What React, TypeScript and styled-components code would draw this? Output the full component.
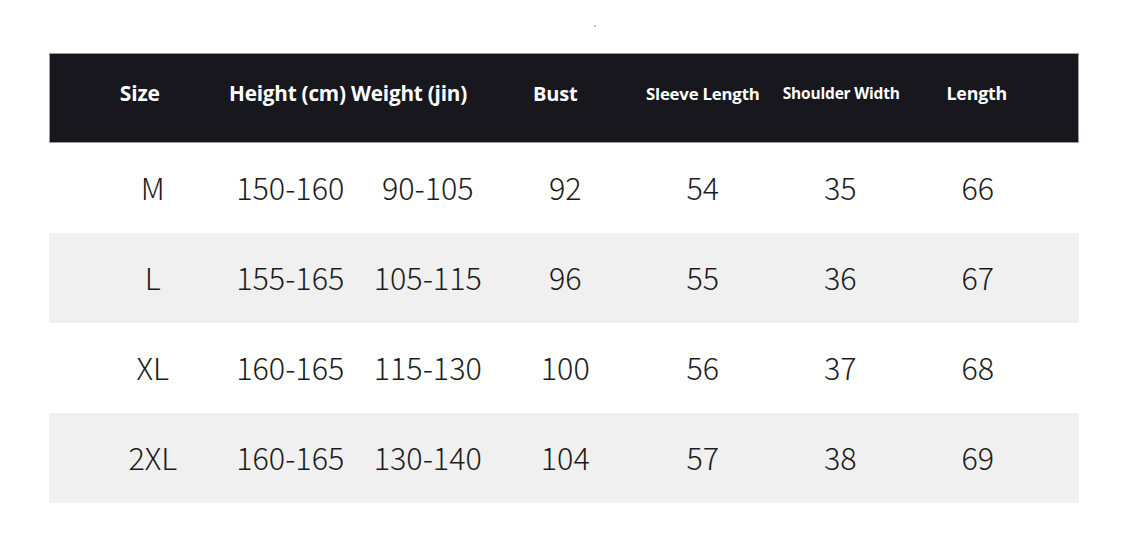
import styled, { createGlobalStyle } from "styled-components";

const GlobalStyle = createGlobalStyle`
  html, body {
    margin: 0;
    padding: 0;
    background: #ffffff;
  }
`;

const Page = styled.div`
  width: 1125px;
  height: 550px;
  box-sizing: border-box;
  padding: 53px 46px 0 49px;
  background: #ffffff;
  position: relative;
`;

const Speck = styled.span`
  position: absolute;
  top: 25px;
  left: 594px;
  width: 2px;
  height: 2px;
  background: #c8c8c8;
`;

const Table = styled.div`
  width: 1030px;
  display: flex;
  flex-direction: column;
`;

const HeaderRow = styled.div`
  height: 90px;
  box-sizing: border-box;
  background: #18171d;
  border: 1px solid #9c9c9c;
  display: grid;
  grid-template-columns: 35px repeat(7, 137.5px) 1fr;
  align-items: center;
  padding-bottom: 10px;
`;

const HeadCell = styled.div<{ $shift?: number; $size?: number; $span?: number }>`
  grid-column: span ${(p) => p.$span ?? 1};
  text-align: center;
  color: #ffffff;
  font-family: "Open Sans", "Noto Sans", sans-serif;
  font-weight: 700;
  font-size: ${(p) => p.$size ?? 20}px;
  letter-spacing: -0.2px;
  white-space: nowrap;
  transform: translateX(${(p) => p.$shift ?? 0}px);
`;

const Row = styled.div<{ $shade?: boolean }>`
  height: 90px;
  background: ${(p) => (p.$shade ? "#f0f0f0" : "#ffffff")};
  display: grid;
  grid-template-columns: 35px repeat(7, 137.5px) 1fr;
  align-items: center;
`;

const Cell = styled.div`
  text-align: center;
  color: #1c1c1c;
  font-family: "Noto Sans CJK SC", "Noto Sans", sans-serif;
  font-weight: 300;
  font-size: 30.5px;
  white-space: nowrap;
  padding-bottom: 2px;
`;

const rows = [
  ["M", "150-160", "90-105", "92", "54", "35", "66"],
  ["L", "155-165", "105-115", "96", "55", "36", "67"],
  ["XL", "160-165", "115-130", "100", "56", "37", "68"],
  ["2XL", "160-165", "130-140", "104", "57", "38", "69"],
];

const App = () => {
  return (
    <>
      <GlobalStyle />
      <Page>
        <Speck />
        <Table>
          <HeaderRow>
            <span />
            <HeadCell $shift={-14} $size={21}>
              Size
            </HeadCell>
            <HeadCell $span={2} $shift={-12} $size={20.7}>
              Height (cm) Weight (jin)
            </HeadCell>
            <HeadCell $shift={-11}>Bust</HeadCell>
            <HeadCell $size={16.8} $shift={-1}>
              Sleeve Length
            </HeadCell>
            <HeadCell $size={15.5}>Shoulder Width</HeadCell>
            <HeadCell $size={17.8} $shift={-2}>
              Length
            </HeadCell>
          </HeaderRow>
          {rows.map((r, i) => (
            <Row key={r[0]} $shade={i % 2 === 1}>
              <span />
              {r.map((v, j) => (
                <Cell key={j}>{v}</Cell>
              ))}
            </Row>
          ))}
        </Table>
      </Page>
    </>
  );
};

export default App;
